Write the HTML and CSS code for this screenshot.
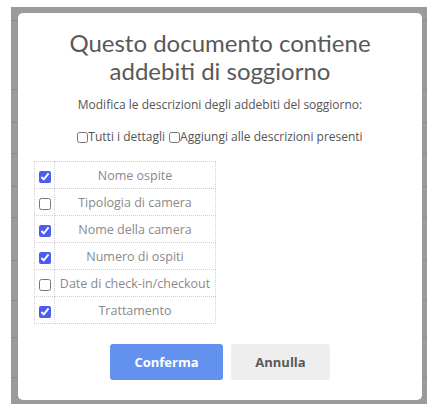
FILE: index.html
```html
<!DOCTYPE html>
<html lang="it">
<head>
<meta charset="utf-8">
<link rel="stylesheet" href="styles.css">
</head>
<body>
<div class="screen">
  <div class="bg-line" style="top:13px"></div>
  <div class="bg-line" style="top:82px"></div>
  <div class="bg-line" style="top:115px"></div>
  <div class="bg-line" style="top:146px"></div>
  <div class="bg-line" style="top:179px"></div>
  <div class="bg-line" style="top:210px"></div>
  <div class="bg-line" style="top:253px"></div>
  <div class="bg-line" style="top:293px"></div>
  <div class="bg-line" style="top:330px"></div>
  <div class="bg-line" style="top:370px"></div>
  <div class="modal">
    <h1 class="title">Questo documento contiene addebiti di soggiorno</h1>
    <p class="subtitle">Modifica le descrizioni degli addebiti del soggiorno:</p>
    <div class="options">
      <label class="opt"><input type="checkbox">Tutti i dettagli</label>
      <label class="opt"><input type="checkbox">Aggiungi alle descrizioni presenti</label>
    </div>
    <table class="fields">
      <tr><td class="cb"><input type="checkbox" checked></td><td class="name">Nome ospite</td></tr>
      <tr><td class="cb"><input type="checkbox"></td><td class="name">Tipologia di camera</td></tr>
      <tr><td class="cb"><input type="checkbox" checked></td><td class="name">Nome della camera</td></tr>
      <tr><td class="cb"><input type="checkbox" checked></td><td class="name">Numero di ospiti</td></tr>
      <tr><td class="cb"><input type="checkbox"></td><td class="name">Date di check-in/checkout</td></tr>
      <tr><td class="cb"><input type="checkbox" checked></td><td class="name">Trattamento</td></tr>
    </table>
    <div class="actions">
      <button class="btn btn-primary">Conferma</button>
      <button class="btn btn-secondary">Annulla</button>
    </div>
  </div>
</div>
</body>
</html>
```
FILE: styles.css
```css
html, body {
  margin: 0;
  padding: 0;
  background: #ffffff;
  font-family: "Open Sans", "Noto Sans", sans-serif;
}
.screen {
  position: relative;
  margin: 7px 0 0 11px;
  width: 416px;
  height: 397px;
  background: #9b9b9b;
  padding: 6px 0 0 7px;
  box-sizing: border-box;
}
.bg-line {
  position: absolute;
  left: 0;
  right: 0;
  height: 1px;
  background: #8a8a8a;
}
.modal {
  position: relative;
  width: 404px;
  height: 387px;
  background: #ffffff;
  border-radius: 5px;
  box-sizing: border-box;
  padding: 16px 16px 0 16px;
  display: flex;
  flex-direction: column;
  align-items: center;
}
.title {
  margin: 0;
  font-family: "Lato", "Open Sans", sans-serif;
  font-size: 24px;
  line-height: 28px;
  font-weight: 400;
  color: #595959;
  text-align: center;
  width: 360px;
}
.subtitle {
  margin: 11px 0 0;
  font-size: 12px;
  line-height: 18px;
  color: #545454;
}
.options {
  margin-top: 15px;
  display: flex;
  gap: 4px;
  font-size: 12px;
  line-height: 16px;
  color: #545454;
}
.opt {
  display: flex;
  align-items: center;
}
.opt input {
  margin: 0;
  width: 11px;
  height: 11px;
}
.fields {
  align-self: flex-start;
  margin-top: 16px;
  border-collapse: collapse;
  width: 182px;
}
.fields td {
  border: 1px dotted #cfcfcf;
  height: 26px;
  padding: 0;
}
.fields .cb {
  width: 19px;
  text-align: center;
}
.fields .cb input {
  margin: 0;
  width: 12px;
  height: 12px;
  vertical-align: middle;
  accent-color: #4a5cf2;
}
.fields .name {
  text-align: center;
  font-size: 12.5px;
  color: #8a8a8a;
  white-space: nowrap;
}
.actions {
  margin-top: 20px;
  display: flex;
  gap: 8px;
}
.btn {
  height: 36px;
  border: none;
  border-radius: 3px;
  font-family: "Open Sans", "Noto Sans", sans-serif;
  font-size: 13px;
  font-weight: 700;
}
.btn-primary {
  width: 113px;
  background: #6391ef;
  color: #ffffff;
}
.btn-secondary {
  width: 99px;
  background: #eeeeee;
  color: #5a5a5a;
}
```
